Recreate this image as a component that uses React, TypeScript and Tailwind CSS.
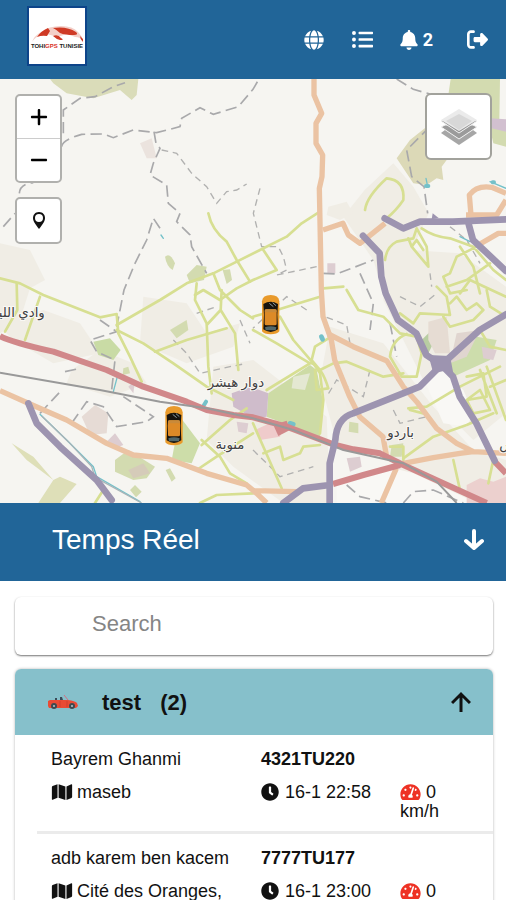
import React from "react";
import { FaBell, FaClock, FaGlobe, FaListUl, FaMap, FaTachometerAlt } from "react-icons/fa";
import { FaMinus, FaPlus, FaRightFromBracket } from "react-icons/fa6";

type Vehicle = { driver: string; plate: string; place: string; time: string; speed: string };

const vehicles: Vehicle[] = [
  { driver: "Bayrem Ghanmi", plate: "4321TU220", place: "maseb", time: "16-1 22:58", speed: "0 km/h" },
  { driver: "adb karem ben kacem", plate: "7777TU177", place: "Cité des Oranges,", time: "16-1 23:00", speed: "0 km/h" },
];

function Logo() {
  return (
    <svg viewBox="0 0 60 60" className="h-[60px] w-[60px]" role="img" aria-label="TOHI GPS TUNISIE">
      <rect width="60" height="60" fill="#0d4489" />
      <rect x="2" y="2" width="56" height="56" fill="#fff" />
      <path d="M5 36Q7 30 14 26Q22 20 34 20Q46 20 51 26L55 31L55 35Q54 31 48 31L40 28L30 31Q20 27 14 29Q8 31 5 36Z" fill="#f3cfc8" />
      <path d="M10 31Q14 25 21 22L23 25L20 30Q15 29 10 31ZM26 22Q40 20 49 26Q52 29 47 29Q38 29 33 27Q30 24 26 22ZM26 30Q31 28 34 32Q38 34 33 34Q29 33 26 30ZM53 30L56 33V36Q53 33 53 30Z" fill="#cf3a25" />
      <text x="30" y="42" textAnchor="middle" fontFamily="Liberation Sans, Arial, sans-serif" fontSize="6" fontWeight="700" fill="#222">
        TOHI<tspan fill="#d9301f">GPS</tspan> TUNISIE
      </text>
    </svg>
  );
}

function TaxiMarker({ x, y }: { x: number; y: number }) {
  return (
    <g transform={`translate(${x} ${y})`}>
      <path d="M-26-40Q-24-59 0-59Q24-59 26-40V50Q20 59 0 59Q-20 59-26 50Z" fill="#e99a2b" />
      <path d="M-22-32Q0-46 22-32L20 0L22 44Q10 52 0 52Q-10 52-22 44L-20 0Z" fill="#17130d" />
      <path d="M-4-34L8-24M6-36L16-27" stroke="#8b9ca4" strokeWidth="3" />
      <rect x="-18" y="-16" width="36" height="48" rx="5" fill="#dd8a27" />
      <rect x="-18" y="-16" width="36" height="9" rx="4" fill="#c98a3a" />
      <path d="M-17 38Q0 32 17 38L15 47H-15Z" fill="#52686b" />
    </g>
  );
}

function MapCanvas() {
  return (
    <svg viewBox="0 -3 1518 1272" preserveAspectRatio="xMidYMid slice" className="block h-full w-full" aria-hidden="true">
      <rect x="-500" y="-200" width="2600" height="1700" fill="#f6f5f1" />

      <g fill="#f0ede5">
        <path d="M0 490L90 510L135 600L90 625L60 720L0 760Z" />
        <path d="M0 740L130 690L240 730L300 820L160 850L40 780Z" />
        <path d="M215 870L300 810L400 850L440 910L330 950L200 910Z" />
        <path d="M1094 330L1180 250L1240 320L1286 400L1240 500L1290 640L1150 640L1120 540L1030 410Z" />
        <path d="M1160 520L1230 510L1380 520L1518 620V1000L1420 1080L1330 990L1270 900L1200 760L1150 660Z" />
        <path d="M990 740L1150 790L1300 980L1420 1110L1518 1140V1269H1210L1180 1150L1010 1090L960 900Z" />
        <path d="M640 860L760 840L980 1010L990 1269H850L700 1160L620 1080Z" />
        <path d="M430 650L560 670L620 760L720 730L700 800L560 850L420 790Z" />
        <path d="M985 380L1040 365L1060 400L1020 420L980 405Z" />
      </g>
      <path d="M1275 905L1330 870L1390 930L1420 1000L1400 1040L1330 1030Z" fill="#f9f8f5" />
      <path d="M1010 1205L1180 1165L1240 1180L1430 1269H1010Z" fill="#f9f8f5" />
      <g fill="#d3dbb0">
        <path d="M150-3H415L410 45L395 60L360 30L280 55L200 40L160 10Z" fill="#dadcb9" />
        <path d="M1190 235L1230 180L1280 140V225L1340 240L1325 260L1330 300L1310 295L1280 315L1240 310Z" fill="#dcd9b7" />
        <path d="M1352-3H1500L1498 120L1518 150V200L1480 190L1450 60L1400 45H1345Z" />
        <path d="M560 585L590 555L620 560L612 600L570 610Z" />
        <path d="M495 530Q510 515 525 550L518 570Q500 560 495 530Z" />
        <path d="M668 570L690 568L696 600L680 612Z" />
        <path d="M280 785L330 775L362 810L340 840L295 825Z" fill="#c9dba5" />
        <path d="M370 865L385 860L390 880L368 885Z" />
        <path d="M540 1010L600 1090L575 1150L515 1140Z" fill="#cddda9" />
        <path d="M510 750L560 720L565 750L530 775Z" />
        <path d="M35 1090L100 1130L160 1200L180 1190L230 1212L180 1269H115L160 1200L80 1140Z" fill="#dedfb8" />
        <path d="M345 1140L385 1110L465 1160L440 1195L400 1200L345 1175Z" />
        <path d="M390 1230L405 1215L425 1235L408 1252ZM497 1170L510 1165L527 1195L515 1205Z" />
        <path d="M805 940L930 855L950 870L970 970L960 1070L800 1010Z" fill="#cddba5" />
        <path d="M1345 830L1430 770L1490 780L1470 840L1360 890Z" fill="#cdddac" />
        <path d="M1265 780L1290 755L1300 790L1285 820Z" fill="#b8cda2" />
        <path d="M1048 1025L1075 1030L1075 1060L1046 1055ZM1175 1095L1210 1090L1205 1130H1170Z" />
      </g>
      <path d="M880 890L930 880L915 930L875 925Z" fill="#e4e8d2" />
      <g fill="#ddcdd1">
        <path d="M695 940L750 920L805 940L800 1010L760 1015L700 980Z" fill="#cfbccb" />
        <path d="M245 1010L285 975L325 1000L320 1060L270 1065Z" fill="#e6dbd5" />
        <path d="M320 1085L345 1060L370 1095L345 1105Z" />
        <path d="M385 1170L430 1150L450 1180L400 1195Z" fill="#d5cbb9" />
        <path d="M1285 725L1340 710L1350 820L1305 820L1285 780Z" fill="#e6dcd3" />
        <path d="M1370 760L1440 750L1400 830L1350 850Z" fill="#e0d5cf" />
        <path d="M1445 800L1490 810L1480 840L1450 835Z" />
        <path d="M1470 115L1518 118V155L1475 145Z" fill="#d2c0d0" />
        <path d="M1400 1215L1440 1195L1480 1205L1518 1190V1269H1400Z" fill="#ecd0ce" />
        <path d="M765 1050L830 1020L850 1040L840 1070L780 1080Z" fill="#efcbcb" />
        <path d="M982 550H1006V580H982ZM1040 1135L1080 1130L1085 1160L1050 1175Z" />
        <path d="M420 190L455 175L470 235L440 235Z" fill="#ebe3de" />
        <path d="M385 920L405 900L400 940Z" />
        <path d="M710 1025L745 1030L740 1060L715 1055Z" />
      </g>

      <g fill="none" stroke="#a9a9ab" strokeWidth="5" strokeDasharray="34 16">
        <path d="M10 440L45 400M58 340Q60 312 100 308M185 200Q186 180 245 163L310 162L340 173L400 150L470 158L540 140L545 115L600 83L640 103L715 80L759 28L777-3" />
        <path d="M190 160V90L240 55L285 50L340 20L375 8" />
        <path d="M462 155L468 190L480 205L460 250L450 285L500 315L505 370L540 400L530 425L570 465L575 500L620 580" />
        <path d="M480 445L460 415L440 480L405 550L372 630L350 740" />
        <path d="M1190-3L1240 28L1290 42L1310 45M1290 140L1220 210L1235 290L1272 320L1283 400" />
        <path d="M300 720L350 755L270 780L290 815L345 840L335 930M195 875L240 865M120 1000L185 930M215 1030L260 965L310 980L350 1040L440 1025L460 1010L370 950" />
        <path d="M970 580L1010 582L1120 540M1080 580L1120 670L1110 750M1170 730L1190 830" />
        <path d="M1040 1215L1080 1250L1160 1269M1210 1269L1240 1235L1300 1230L1390 1269" />
      </g>
      <g fill="none" stroke="#b1b1b0" strokeWidth="4" strokeDasharray="20 14">
        <path d="M485 210L530 220L575 280L620 320L650 370L680 335L710 330L740 312" />
        <path d="M520 780L560 820L600 880L690 860L740 850M720 720L750 790M590 700L650 680M920 690L860 650L759 745" />
        <path d="M780 325L760 400L785 500L835 500L850 530L860 570L830 585L950 560M980 712L1040 735L1050 790M1110 870L1090 950L1010 900L980 950M1180 990L1200 1030L1280 1010M1200 650L1260 680L1310 640" />
        <path d="M759 1110L800 1150L840 1190L940 1160M1350 440L1400 480L1440 550M1290 580L1295 620" />
      </g>

      <g fill="none" stroke="#d7df92" strokeWidth="8" strokeLinejoin="round" strokeLinecap="round">
        <path d="M0 595L60 610L130 645L300 712L350 702L355 760L390 830L425 905" />
        <path d="M50 610L52 690L15 755M120 650L75 780" />
        <path d="M625 400Q635 450 680 485L710 540L750 605" />
        <path d="M350 735L480 660L560 610L640 580L780 510L860 470L905 430L955 398" />
        <path d="M350 750L430 790L520 850L620 920L700 960" />
        <path d="M465 815L560 780L680 745" />
        <path d="M590 610L585 660L620 730L625 860L635 940M640 580L660 630L720 690L759 715M665 630L662 690L620 735M662 690L705 760L715 870" />
        <path d="M585 645L610 630L660 660L710 625L759 600L830 570L790 510" />
        <path d="M759 710L830 690L960 650M840 710L880 780L940 850L960 880L970 960L960 1060M759 750L830 790L930 850L800 930" />
        <path d="M994 770L945 800L935 840L960 870L1000 850L1040 845L1150 890L1210 880M935 850Q965 860 985 925L950 930L945 870" />
        <path d="M1040 630L1075 690L1150 710L1200 760L1250 770L1265 820L1250 890L1205 890L1170 830Q1175 780 1220 762" />
        <path d="M1095 390Q1100 350 1160 295Q1215 300 1210 360Q1190 390 1160 415" />
        <path d="M1155 540Q1160 500 1190 485L1240 475L1250 445L1280 500L1285 560L1235 500L1225 475M1235 500L1250 480L1270 510" />
        <path d="M1265 445Q1300 470 1350 475L1420 500L1480 570L1518 600M1380 500L1420 560L1440 640M1470 550L1400 600L1340 620M1430 500L1370 530L1350 580L1330 590L1350 640L1400 630" />
        <path d="M1200 700L1240 730L1260 700L1350 705L1340 650L1310 620M1350 670L1370 650L1400 690L1430 670L1450 690L1420 720L1350 740L1330 710M1380 640L1410 600L1518 650M1440 750L1470 800L1518 810M1460 630L1470 680L1518 710" />
        <path d="M1225 985L1280 980L1380 920L1500 860M1230 990L1270 1000M1210 1135L1300 1070L1400 1035L1480 1000M1400 960L1440 930L1470 990L1420 1000ZM1440 870L1490 1000M1460 860L1500 970L1518 1020M1470 920L1518 900M1400 890L1450 880L1460 950L1400 960" />
        <path d="M759 1030L790 1100L845 1225M790 1120L840 1100L850 1140L900 1120L910 1100L960 1095" />
        <path d="M605 1095L690 1020L740 985M605 1080L660 1130L690 1180L740 1210M590 1170L650 1130L759 1060M600 1269L650 1245L759 1240M285 1269L310 1230" />
        <path d="M1360 1140L1380 1230M1480 1140L1465 1210M970 625L1030 620M1170 1100H1210V1140" />
      </g>

      <g fill="none" stroke="#74c1c9" strokeWidth="4" strokeLinecap="round">
        <path d="M483 465L490 475M1278 295L1283 320M1470 305L1518 325M340 935L352 890M1380 470L1410 485M120 1003L200 1080L280 1160L290 1190L420 1265" />
        <path d="M1278 318H1285M1478 307H1482M612 975L618 965" strokeWidth="12" />
        <path d="M964 770L968 778M870 1030L880 1033" strokeWidth="14" />
      </g>
      <path d="M125 1008L205 1085L275 1160L285 1192L425 1269" fill="none" stroke="#a9b4b8" strokeWidth="4" />

      <g fill="none" stroke="#ebc3a3" strokeWidth="16" strokeLinejoin="round">
        <path d="M942-3V45L965 100L948 130V190L968 225L966 290L958 325L964 630L969 710L994 780L1004 840L1049 950L1079 1010L1149 1070L1159 1125" />
        <path d="M985 762L1060 800L1160 842L1210 920L1250 965L1310 1045L1370 1090L1420 1115L1518 1120M1210 1150L1300 1133L1380 1120L1420 1115" />
        <path d="M969 450L1029 430L1045 465L1080 490L1155 430" />
        <path d="M1413 405L1408 345Q1430 315 1475 322L1518 340M1398 405H1490L1518 360M1440 492L1495 460H1518" />
        <path d="M0 932L90 972L200 1020L320 1090L400 1125L500 1135L620 1180L740 1215L770 1240L800 1269M759 1232L890 1235M1189 1165L1144 1269" />
      </g>

      <g fill="none" strokeLinejoin="round">
        <path d="M0 768Q30 785 160 815L320 870L430 920L560 965L620 990L700 1005L759 1012L860 1040L1000 1093L1060 1108L1140 1120L1210 1155L1320 1205L1460 1269M999 1212L1090 1185L1200 1155M1484 1145L1518 1180" stroke="#d1888a" strokeWidth="18" />
        <path d="M820 1035L860 1022L870 1050L835 1068Z" fill="#d1888a" />
        <path d="M0 878L300 930L480 965L620 985L759 1015L880 1050L1030 1110L1210 1150L1310 1205L1370 1269" stroke="#999" strokeWidth="6" />
      </g>

      <g fill="none" stroke="#9d94b0" strokeWidth="20" strokeLinecap="round" strokeLinejoin="round">
        <path d="M1154 415L1210 445L1260 425L1359 425L1518 418M1404 425L1419 480L1518 573" />
        <path d="M1089 467L1139 520L1144 590L1157 640L1194 720L1249 760L1279 825L1324 855L1359 890L1379 950L1429 1030L1484 1142" />
        <path d="M850 1269L909 1225L989 1215M989 1269V1150L1006 1080Q1010 1015 1059 1000L1209 940L1259 920L1324 855L1439 750L1518 703" />
        <path d="M85 970L110 1030L180 1100L290 1200L335 1260" />
      </g>
      <path d="M1285 825L1350 828L1362 890L1335 872L1300 880Z" fill="#9d94b0" />
      <path d="M1295 418L1298 400L1316 414Z" fill="#9d94b0" />

      <g fontFamily="Noto Sans, DejaVu Sans, sans-serif" fontSize="40" fill="#3f3f42" textAnchor="middle">
        <g stroke="#faf9f5" strokeWidth="6" paintOrder="stroke">
          <text x="50" y="712">وادي الليل</text>
          <text x="708" y="922">دوار هيشر</text>
          <text x="690" y="1107">منوبة</text>
          <text x="1202" y="1070">باردو</text>
          <text x="1522" y="1107">س</text>
        </g>
      </g>

      <TaxiMarker x={522} y={1037} />
      <TaxiMarker x={812} y={704} />
    </svg>
  );
}

function LayersIcon() {
  return (
    <svg viewBox="0 0 38 38" className="h-[38px] w-[38px]" aria-hidden="true">
      <path d="M1 25L19 37L37 25L33 22H5Z" fill="#a6a6a6" />
      <path d="M1 19L19 31L37 19L33 17H5Z" fill="#9b9b9b" stroke="#f4f4f4" />
      <path d="M1 13L19 25L37 13L33 11H5Z" fill="#969696" stroke="#f4f4f4" />
      <path d="M1 12L19 1L37 12L19 23Z" fill="#ebebeb" />
      <path d="M6 13L19 6L32 13L19 22Z" fill="#d8d8d8" />
    </svg>
  );
}

function PinIcon() {
  return (
    <svg viewBox="0 0 14 17" className="h-[17px] w-[14px]" aria-hidden="true">
      <path fillRule="evenodd" d="M7 0C3 0 1 3 1 6C1 9 3 12 7 17C11 12 13 9 13 6C13 3 11 0 7 0ZM7 2A4 4 0 1 0 7 10A4 4 0 1 0 7 2Z" fill="#111" />
    </svg>
  );
}

function CarIcon() {
  return (
    <svg viewBox="0 0 30 16" className="h-4 w-[30px] shrink-0" aria-hidden="true">
      <path d="M7 6V4H9V6M12 6V3H14L15 6" fill="#394b58" />
      <path d="M16 1L20 6" stroke="#d66d82" strokeWidth="1" />
      <path d="M0 7L2 6H20Q27 7 29 9L30 12L28 14H1L0 12Z" fill="#e94b35" />
      <path d="M12 7V13M19 7V13" stroke="#cf4030" />
      <circle cx="6" cy="12" r="3" fill="#3d4a50" />
      <circle cx="6" cy="12" r="1" fill="#b8c5c9" />
      <circle cx="24" cy="12" r="3" fill="#3d4a50" />
      <circle cx="24" cy="12" r="1" fill="#b8c5c9" />
    </svg>
  );
}

function VehicleRow({ vehicle }: { vehicle: Vehicle }) {
  return (
    <li className="ml-[22px] grid h-[99px] grid-cols-[210fr_139fr_93fr] grid-rows-[33px_1fr] border-b-[3px] border-[#ebebeb] pt-[15px] pl-[14px] text-lg leading-[19px]">
      <span>{vehicle.driver}</span>
      <strong className="col-span-2">{vehicle.plate}</strong>
      <span>
        <FaMap className="mr-1 inline-block h-[18px] w-[22px] align-[-3px]" />
        {vehicle.place}
      </span>
      <span>
        <FaClock className="mr-[6px] inline-block h-[18px] w-[18px] align-[-3px]" />
        {vehicle.time}
      </span>
      <span className="mr-4">
        <FaTachometerAlt className="mr-[5px] inline-block h-[18px] w-[21px] align-[-3px] text-[#ee3124]" />
        {vehicle.speed}
      </span>
    </li>
  );
}

export default function App() {
  return (
    <div className="h-screen overflow-y-auto bg-white font-['Liberation_Sans',Arial,sans-serif] text-[#111]">
      <header className="flex h-[79px] items-center justify-between bg-[#216598] pr-[18px] pl-[27px] text-white">
        <div className="-mt-2">
          <Logo />
        </div>
        <nav className="flex items-center">
          <button type="button" aria-label="Langue" className="mr-7"><FaGlobe size={20} /></button>
          <button type="button" aria-label="Liste" className="mr-[26px]"><FaListUl size={21} /></button>
          <button type="button" aria-label="Notifications" className="mr-[34px] flex items-center gap-1 font-['Roboto',sans-serif] text-lg leading-5 font-bold">
            <FaBell size={20} />
            2
          </button>
          <button type="button" aria-label="Déconnexion"><FaRightFromBracket size={21} /></button>
        </nav>
      </header>

      <section aria-label="Carte" className="relative h-[424px] overflow-hidden">
        <MapCanvas />
        <div className="absolute top-[15px] left-[15px] flex w-[47px] flex-col rounded-[5px] border-2 border-[#b0b0ad] bg-white">
          <button type="button" aria-label="Zoom avant" className="flex h-[43px] items-center justify-center border-b border-[#ccc] text-black"><FaPlus size={20} /></button>
          <button type="button" aria-label="Zoom arrière" className="flex h-[42px] items-center justify-center text-black"><FaMinus size={20} /></button>
        </div>
        <button type="button" aria-label="Ma position" className="absolute top-[118px] left-[15px] flex h-[47px] w-[47px] items-center justify-center rounded-[5px] border-2 border-[#b0b0ad] bg-white"><PinIcon /></button>
        <button type="button" aria-label="Couches" className="absolute top-[14px] right-[14px] flex h-[67px] w-[67px] items-center justify-center rounded-md border-2 border-[#a2a29c] bg-white"><LayersIcon /></button>
      </section>

      <div className="flex h-[78px] items-center justify-between bg-[#216598] pr-[22px] pb-1 pl-[52px] text-white">
        <h1 className="text-[28px] leading-8">Temps Réel</h1>
        <button type="button" aria-label="Réduire">
          <svg viewBox="0 0 20 22" className="h-[22px] w-5" fill="none" stroke="currentColor" strokeWidth="4" strokeLinecap="round" strokeLinejoin="round">
            <path d="M10 2V19M2 12L10 19L18 12" />
          </svg>
        </button>
      </div>

      <main className="pt-4 pr-[13px] pl-[15px]">
        <input
          type="search"
          aria-label="Search"
          placeholder="Search"
          className="mb-[14px] block h-[58px] w-full rounded-md bg-white pb-1 pl-[77px] text-[22px] shadow-[0_1px_2px_rgba(0,0,0,0.55)] outline-none placeholder:text-[#858585]"
        />
        <section className="rounded-t-md shadow-[0_0_3px_rgba(0,0,0,0.3)]">
          <button type="button" aria-expanded="true" className="flex h-[66px] w-full items-center rounded-t-md bg-[#86c0cb] pr-[22px] pl-[33px] text-[22px] font-bold">
            <CarIcon />
            <span className="ml-6">test</span>
            <span className="ml-[19px]">(2)</span>
            <svg viewBox="0 0 20 22" className="ml-auto h-[22px] w-5" fill="none" stroke="currentColor" strokeWidth="3" aria-hidden="true">
              <path d="M10 21V3M1 12L10 3L19 12" />
            </svg>
          </button>
          <ul>
            {vehicles.map((vehicle) => (
              <VehicleRow key={vehicle.plate} vehicle={vehicle} />
            ))}
          </ul>
        </section>
      </main>
    </div>
  );
}
